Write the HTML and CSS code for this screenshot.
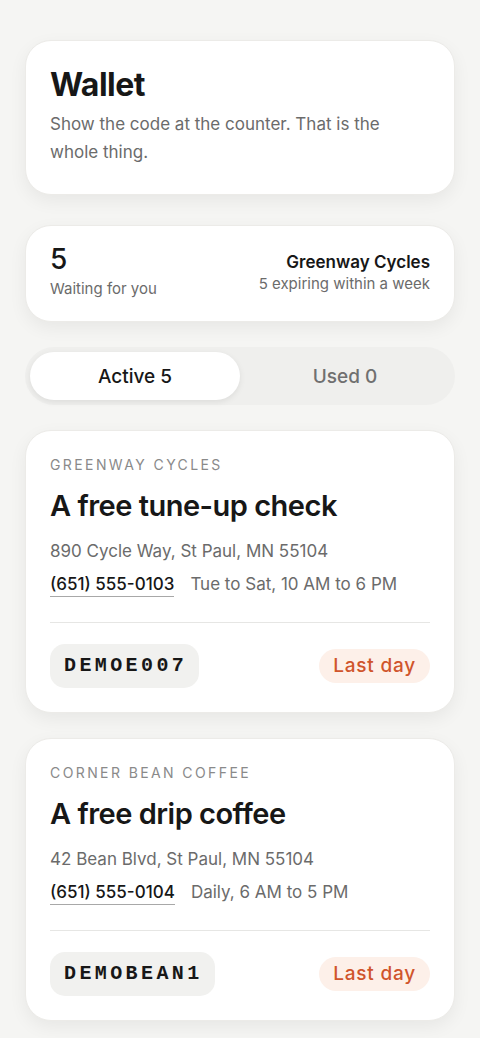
FILE: index.html
```html
<!DOCTYPE html>
<html lang="en">

<head>
    <meta charset="UTF-8">
    <meta name="viewport" content="width=device-width, initial-scale=1.0">
    <title>Wallet</title>
    <link rel="stylesheet" href="styles.css">
</head>

<body>
    <main class="wallet">
        <!-- Header -->
        <section class="card header-card">
            <h1>Wallet</h1>
            <p>Show the code at the counter. That is the whole thing.</p>
        </section>

        <!-- Summary -->
        <section class="card summary">
            <div class="summary-left">
                <div class="summary-count">5</div>
                <div class="summary-label">Waiting for you</div>
            </div>
            <div class="summary-right">
                <div class="summary-shop">Greenway Cycles</div>
                <div class="summary-label">5 expiring within a week</div>
            </div>
        </section>

        <!-- Tabs -->
        <div class="tabs">
            <button class="tab active">Active 5</button>
            <button class="tab">Used 0</button>
        </div>

        <!-- Offers -->
        <article class="card offer">
            <div class="offer-shop">GREENWAY CYCLES</div>
            <h2>A free tune-up check</h2>
            <div class="offer-address">890 Cycle Way, St Paul, MN 55104</div>
            <div class="offer-contact">
                <a href="tel:6515550103" class="phone">(651) 555-0103</a>
                <span class="hours">Tue to Sat, 10 AM to 6 PM</span>
            </div>
            <div class="offer-footer">
                <span class="code">DEMOE007</span>
                <span class="badge">Last day</span>
            </div>
        </article>

        <article class="card offer">
            <div class="offer-shop">CORNER BEAN COFFEE</div>
            <h2>A free drip coffee</h2>
            <div class="offer-address">42 Bean Blvd, St Paul, MN 55104</div>
            <div class="offer-contact">
                <a href="tel:6515550104" class="phone">(651) 555-0104</a>
                <span class="hours">Daily, 6 AM to 5 PM</span>
            </div>
            <div class="offer-footer">
                <span class="code">DEMOBEAN1</span>
                <span class="badge">Last day</span>
            </div>
        </article>
    </main>
</body>

</html>
```

FILE: styles.css
```css
body {
    font-family: Inter, "Noto Sans", sans-serif;
    background: #f5f5f3;
    color: #171717;
    margin: 0;
    padding: 0;
}

.wallet {
    display: flex;
    flex-direction: column;
    gap: 25px;
    padding: 40px 25px 40px;
}

/* Cards */
.card {
    background: #fff;
    border-radius: 26px;
    border: 1px solid #ecebe8;
    box-shadow: 0 6px 18px rgba(0, 0, 0, 0.06);
}

.header-card {
    padding: 24px 24px 28px;
    margin-bottom: 5px;
}

.header-card h1 {
    margin: 0;
    font-size: 32px;
    font-weight: 700;
    letter-spacing: -0.5px;
    line-height: 40px;
}

.header-card p {
    margin: 5px 0 0;
    font-size: 17px;
    line-height: 28px;
    color: #6b6b6b;
}

/* Summary */
.summary {
    display: flex;
    justify-content: space-between;
    align-items: flex-start;
    padding: 16px 24px 22px;
}

.summary-count {
    font-size: 28px;
    line-height: 34px;
    font-weight: 500;
    margin-bottom: 3px;
}

.summary-label {
    font-size: 15px;
    line-height: 20px;
    color: #6b6b6b;
}

.summary-right {
    text-align: right;
    margin-top: 8px;
}

.summary-shop {
    font-size: 17px;
    font-weight: 600;
    line-height: 24px;
}

/* Tabs */
.tabs {
    display: flex;
    background: #efefed;
    border-radius: 30px;
    padding: 5px;
}

.tab {
    flex: 1;
    border: none;
    background: transparent;
    font-family: inherit;
    font-size: 19px;
    font-weight: 500;
    color: #707070;
    height: 48px;
    border-radius: 24px;
    cursor: pointer;
}

.tab.active {
    background: #fff;
    color: #171717;
    box-shadow: 0 2px 6px rgba(0, 0, 0, 0.08);
}

/* Offers */
.offer {
    padding: 24px 24px 24px;
}

.offer-shop {
    font-size: 14px;
    letter-spacing: 2.4px;
    color: #8a8a8a;
    line-height: 20px;
}

.offer h2 {
    margin: 13px 0 0;
    font-size: 29px;
    font-weight: 600;
    letter-spacing: -0.5px;
    line-height: 36px;
}

.offer-address {
    margin-top: 15px;
    font-size: 17px;
    line-height: 24px;
    color: #6b6b6b;
}

.offer-contact {
    display: flex;
    gap: 16px;
    margin-top: 9px;
    font-size: 17px;
    line-height: 24px;
    padding-bottom: 25px;
    border-bottom: 1px solid #e6e6e4;
}

.phone {
    color: #171717;
    font-weight: 500;
    text-decoration: none;
    border-bottom: 1px solid #a8a8a8;
}

.hours {
    color: #6b6b6b;
}

.offer-footer {
    display: flex;
    justify-content: space-between;
    align-items: center;
    margin-top: 21px;
}

.code {
    font-family: "Liberation Mono", monospace;
    font-weight: 700;
    font-size: 20px;
    letter-spacing: 3.4px;
    background: #f1f1ef;
    border-radius: 15px;
    padding: 0 12px 0 14px;
    line-height: 44px;
}

.badge {
    background: #fdf0e9;
    color: #d0552c;
    font-size: 19px;
    font-weight: 500;
    letter-spacing: 0.8px;
    border-radius: 17px;
    padding: 0 14px;
    line-height: 34px;
}
```
